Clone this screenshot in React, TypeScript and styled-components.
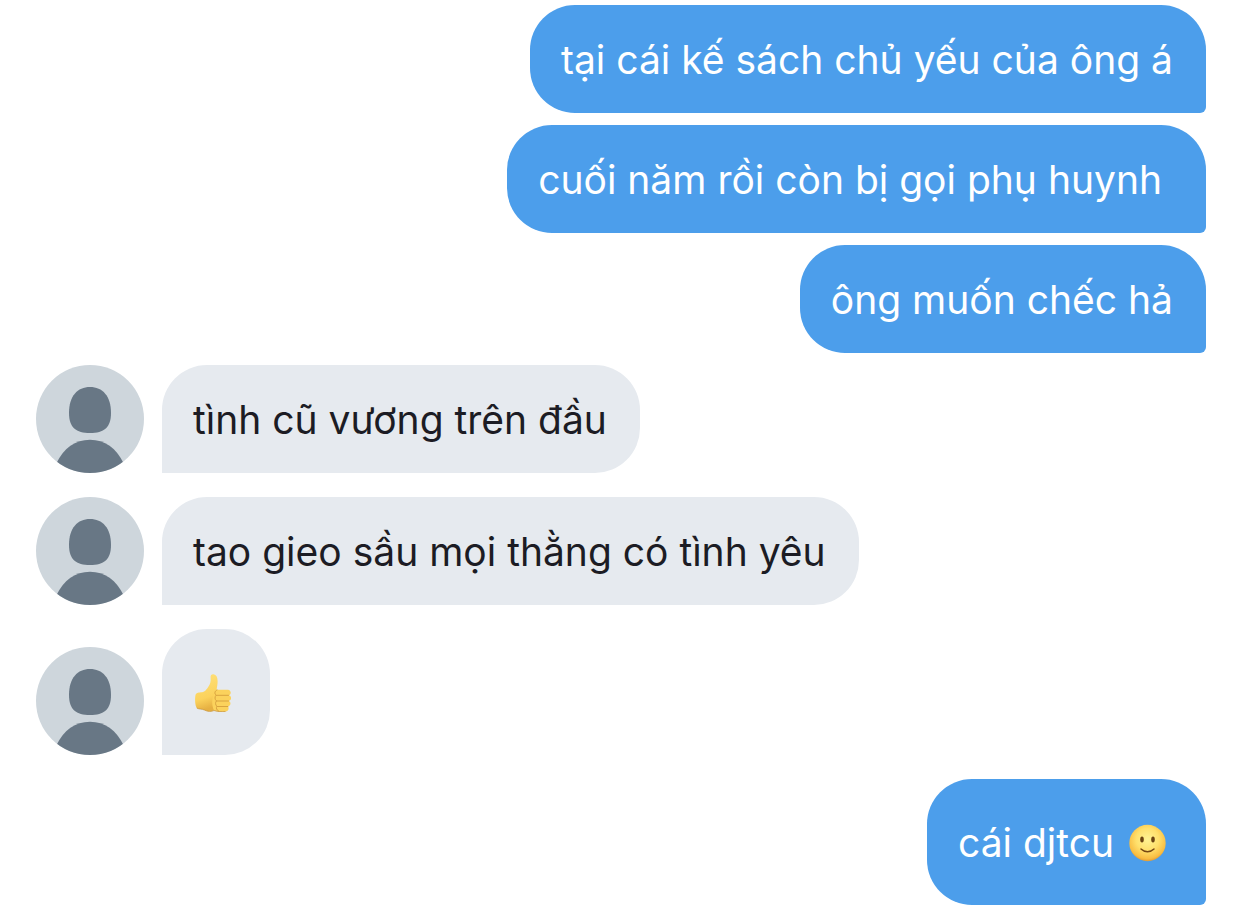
import React from "react";
import styled, { createGlobalStyle, css } from "styled-components";

const GlobalStyle = createGlobalStyle`
  *, *::before, *::after { box-sizing: border-box; }
  body {
    margin: 0;
    background: #ffffff;
    font-family: Inter, "Noto Sans", "Liberation Sans", sans-serif;
  }
`;

type Side = "sent" | "received";

const Thread = styled.ol`
  display: flex;
  flex-direction: column;
  margin: 0;
  padding: 5px 36px 0;
  list-style: none;
`;

const Row = styled.li<{ $side: Side; $gap: number }>`
  display: flex;
  align-items: flex-end;
  justify-content: ${(p) => (p.$side === "sent" ? "flex-end" : "flex-start")};
  gap: 18px;
  padding-top: ${(p) => p.$gap}px;
`;

const Bubble = styled.p<{ $side: Side; $tall: boolean }>`
  margin: 0;
  padding: ${(p) => (p.$tall ? "40px 33px 38px 31px" : "31px 33px 29px 31px")};
  font-size: 39px;
  line-height: 48px;
  white-space: pre-wrap;
  ${(p) =>
    p.$side === "sent"
      ? css`
          color: #ffffff;
          background: #4c9eeb;
          border-radius: 45px 45px 6px 45px;
        `
      : css`
          color: #1c1c24;
          background: #e6eaef;
          border-radius: 45px 45px 45px 0;
        `}
`;

const AvatarImage = styled.svg`
  display: block;
  flex: none;
  width: 108px;
  height: 108px;
  border-radius: 50%;
`;

const EmojiImage = styled.svg<{ $afterText?: boolean }>`
  display: inline-block;
  width: 38px;
  height: 38px;
  margin: 0 6px 0 ${(p) => (p.$afterText ? 4 : 0)}px;
  vertical-align: -5px;
`;

function Avatar() {
  return (
    <AvatarImage viewBox="0 0 108 108" role="img" aria-label="Avatar">
      <rect width="108" height="108" fill="#ced6dc" />
      <path
        d="M54 22C66.500 22 75 31 75 48C75 62.500 68 68 54 68C40 68 33 62.500 33 48C33 31 41.500 22 54 22Z"
        fill="#687785"
      />
      <path d="M20.500 98C28 83 39 74.700 54 74.700C69 74.700 80 83 87.500 98L87.500 108H20.500Z" fill="#687785" />
    </AvatarImage>
  );
}

function Smile() {
  return (
    <EmojiImage $afterText viewBox="0 0 38 38" role="img" aria-label="Slightly smiling face">
      <defs>
        <radialGradient id="smile-face" cx="0.5" cy="0.4" r="0.62">
          <stop offset="0" stopColor="#fff394" />
          <stop offset="0.5" stopColor="#ffe06c" />
          <stop offset="0.85" stopColor="#f8bd42" />
          <stop offset="1" stopColor="#dc9230" />
        </radialGradient>
      </defs>
      <circle cx="18.500" cy="19" r="18.200" fill="url(#smile-face)" />
      <ellipse cx="13" cy="15.500" rx="1.800" ry="2.900" fill="#6b4313" />
      <ellipse cx="24" cy="15.500" rx="1.800" ry="2.900" fill="#6b4313" />
      <path d="M12 25C15.500 28.500 21.500 28.500 25 25" fill="none" stroke="#754713" strokeWidth="1.500" strokeLinecap="round" />
    </EmojiImage>
  );
}

function ThumbsUp() {
  return (
    <EmojiImage viewBox="0 0 38 38" role="img" aria-label="Thumbs up">
      <defs>
        <linearGradient id="thumb-skin" x1="0" y1="0" x2="0.2" y2="1">
          <stop offset="0" stopColor="#ffe17a" />
          <stop offset="0.7" stopColor="#fbd25c" />
          <stop offset="1" stopColor="#e6b042" />
        </linearGradient>
      </defs>
      <path
        d="M2.500 21C3.500 18.200 6 18.600 9 18.300C12 18 13.800 15 15.500 12.500C17.300 9.800 18 7.500 17.600 3.500C17.300 .8 18.800 0 20.500 .2C23.300 .6 24.500 3 24.600 7C24.700 10 24 13 23.500 16L22 35C20 38 15 37.800 11.500 36C8.500 34.700 6 35.300 3.800 34C2 31.500 1.700 24.500 2.500 21Z"
        fill="url(#thumb-skin)"
      />
      <path
        d="M23 15.800H34.800C38.400 16 38.600 20.600 35.800 21.300C38.800 22 38.800 26.300 35.900 27C38.300 28 37.900 31.800 35 32.400C36.500 34.300 35.300 37.400 32.500 37.500C28 37.900 24 37.500 21 36.200C18 31 18.800 21 23 15.800Z"
        fill="#fbd25c"
      />
      <path
        d="M24 16C21.500 17 21.300 19.800 23.200 21.200C21.500 22.800 21.700 25.500 23.500 26.900C22 28.500 22.300 31 24 32.300C22.800 34 23.500 36 25.500 37M23.200 21.300H35.500M23.500 27H35.500M24 32.500H34.800"
        fill="none"
        stroke="#d9a440"
        strokeWidth="1"
        strokeLinecap="round"
      />
      <path d="M3.800 34C6 35.300 8.500 34.700 11.500 36C15 37.800 18 37.800 21 36.500C25 37.800 29 37.700 32.500 37.500" fill="none" stroke="#cc983a" strokeWidth="0.800" />
    </EmojiImage>
  );
}

interface Message {
  side: Side;
  text: string;
  emoji?: React.ReactNode;
}

const messages: Message[] = [
  { side: "sent", text: "tại cái kế sách chủ yếu của ông á" },
  { side: "sent", text: "cuối năm rồi còn bị gọi phụ huynh " },
  { side: "sent", text: "ông muốn chếc hả" },
  { side: "received", text: "tình cũ vương trên đầu" },
  { side: "received", text: "tao gieo sầu mọi thằng có tình yêu" },
  { side: "received", text: "", emoji: <ThumbsUp /> },
  { side: "sent", text: "cái djtcu ", emoji: <Smile /> },
];

function gapBefore(index: number) {
  if (index === 0) return 0;
  return messages[index - 1].side === "sent" ? 12 : 24;
}

export default function App() {
  return (
    <main>
      <GlobalStyle />
      <Thread>
        {messages.map((message, index) => (
          <Row key={index} $side={message.side} $gap={gapBefore(index)}>
            {message.side === "received" && <Avatar />}
            <Bubble $side={message.side} $tall={Boolean(message.emoji)}>
              {message.text}
              {message.emoji}
            </Bubble>
          </Row>
        ))}
      </Thread>
    </main>
  );
}
